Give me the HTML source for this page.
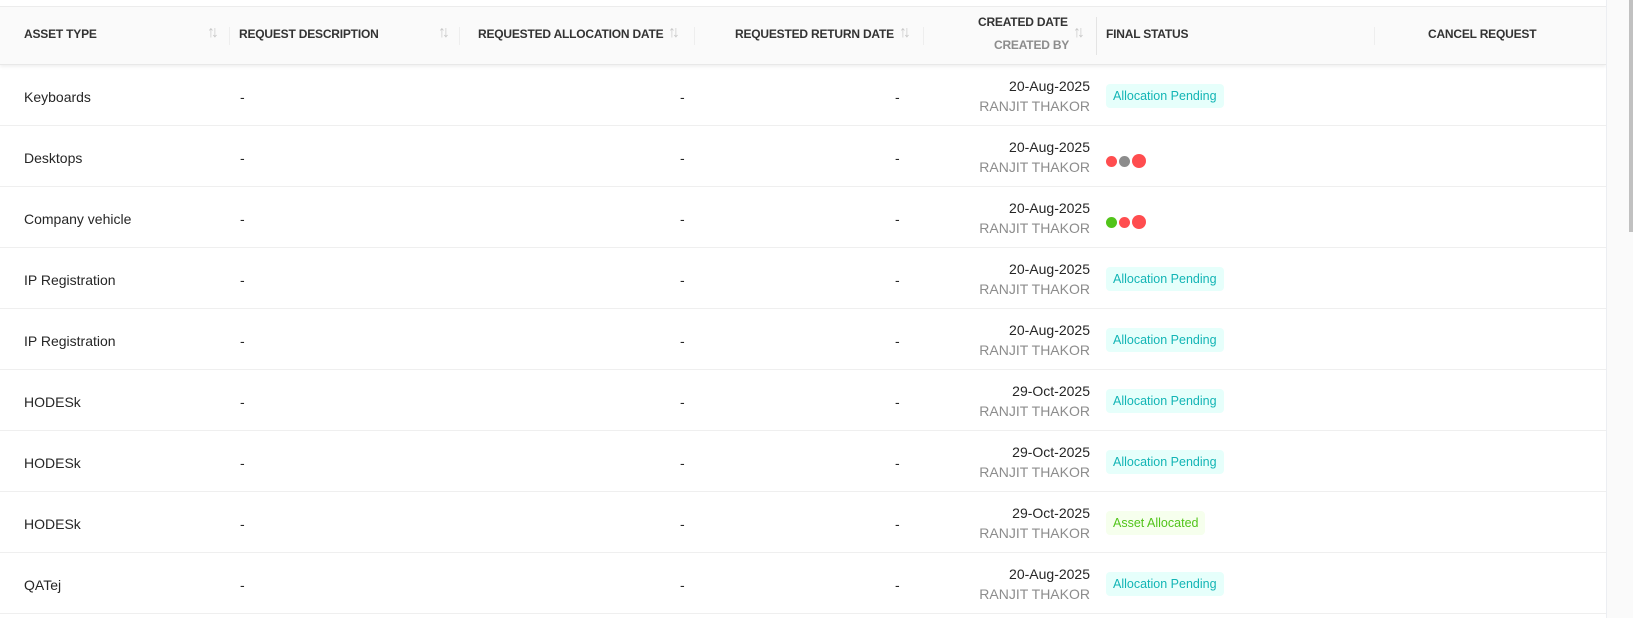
<!DOCTYPE html>
<html><head><meta charset="utf-8"><style>
*{margin:0;padding:0;box-sizing:border-box}
body{width:1633px;height:618px;overflow:hidden;background:#fff;font-family:"Liberation Sans",sans-serif;position:relative;color:#262626}
.wrap{position:absolute;left:0;top:6px;width:1606px;border-top:1px solid #ececec}
.head{height:58px;background:#fafafa;position:relative;box-shadow:0 2px 3px rgba(0,0,0,.06);border-bottom:1px solid #e8e8e8;font-size:12px;font-weight:bold;color:#333;letter-spacing:-0.2px}
.head span{position:absolute}
.sort{color:#c8c8c8;font-weight:normal;font-size:16px;letter-spacing:-4px;top:17px!important}
.sep{position:absolute;top:20px;width:1px;height:18px;background:#eee}
.row{height:61px;border-bottom:1px solid #efefef;position:relative;font-size:14px}
.row span{position:absolute}
.a{left:24px;top:24px}
.d1{left:240px;top:24px}
.d2{left:680px;top:24px}
.d3{left:895px;top:24px}
.dt{right:516px;top:11px;text-align:right;line-height:20px}
.dt i{font-style:normal;color:#8c8c8c;display:block}
.badge{left:1106px;top:19px;height:24px;padding:0 7px;line-height:24px;font-size:12.5px;border-radius:4px}
.p{background:#e6fffb;color:#13b5b5}
.g{background:#f6ffed;color:#52c41a}
.dots{left:1106px;top:26px}
.dots b{display:inline-block;border-radius:50%;margin-right:2px;vertical-align:middle}
.track{position:absolute;left:1606px;top:0;width:27px;height:618px;background:#fafafa;border-left:1px solid #eceef2}
.thumb{position:absolute;left:1629px;top:0;width:4px;height:232px;background:#c1c1c1}
</style></head><body>
<div class="wrap">
<div class="head">
<span style="left:24px;top:20px">ASSET TYPE</span><span class="sort" style="left:207px">↑↓</span>
<div class="sep" style="left:229px"></div>
<span style="left:239px;top:20px">REQUEST DESCRIPTION</span><span class="sort" style="left:438px">↑↓</span>
<div class="sep" style="left:459px"></div>
<span style="left:478px;top:20px">REQUESTED ALLOCATION DATE</span><span class="sort" style="left:668px">↑↓</span>
<div class="sep" style="left:694px"></div>
<span style="left:735px;top:20px">REQUESTED RETURN DATE</span><span class="sort" style="left:899px">↑↓</span>
<div class="sep" style="left:923px"></div>
<span style="left:978px;top:8px">CREATED DATE</span><span style="left:994px;top:31px;color:#8c8c8c">CREATED BY</span><span class="sort" style="left:1073px">↑↓</span>
<div class="sep" style="left:1096px;top:10px;height:38px;background:#e4e4e4"></div>
<span style="left:1106px;top:20px">FINAL STATUS</span>
<div class="sep" style="left:1374px"></div>
<span style="left:1428px;top:20px">CANCEL REQUEST</span>
</div>

<div class="row"><span class="a">Keyboards</span><span class="d1">-</span><span class="d2">-</span><span class="d3">-</span><span class="dt">20-Aug-2025<i>RANJIT THAKOR</i></span><span class="badge p">Allocation Pending</span></div>
<div class="row"><span class="a">Desktops</span><span class="d1">-</span><span class="d2">-</span><span class="d3">-</span><span class="dt">20-Aug-2025<i>RANJIT THAKOR</i></span><span class="dots"><b style="width:11px;height:11px;background:#ff4d4f"></b><b style="width:11px;height:11px;background:#8c8c8c"></b><b style="width:14px;height:14px;background:#ff4d4f"></b></span></div>
<div class="row"><span class="a">Company vehicle</span><span class="d1">-</span><span class="d2">-</span><span class="d3">-</span><span class="dt">20-Aug-2025<i>RANJIT THAKOR</i></span><span class="dots"><b style="width:11px;height:11px;background:#52c41a"></b><b style="width:11px;height:11px;background:#ff4d4f"></b><b style="width:14px;height:14px;background:#ff4d4f"></b></span></div>
<div class="row"><span class="a">IP Registration</span><span class="d1">-</span><span class="d2">-</span><span class="d3">-</span><span class="dt">20-Aug-2025<i>RANJIT THAKOR</i></span><span class="badge p">Allocation Pending</span></div>
<div class="row"><span class="a">IP Registration</span><span class="d1">-</span><span class="d2">-</span><span class="d3">-</span><span class="dt">20-Aug-2025<i>RANJIT THAKOR</i></span><span class="badge p">Allocation Pending</span></div>
<div class="row"><span class="a">HODESk</span><span class="d1">-</span><span class="d2">-</span><span class="d3">-</span><span class="dt">29-Oct-2025<i>RANJIT THAKOR</i></span><span class="badge p">Allocation Pending</span></div>
<div class="row"><span class="a">HODESk</span><span class="d1">-</span><span class="d2">-</span><span class="d3">-</span><span class="dt">29-Oct-2025<i>RANJIT THAKOR</i></span><span class="badge p">Allocation Pending</span></div>
<div class="row"><span class="a">HODESk</span><span class="d1">-</span><span class="d2">-</span><span class="d3">-</span><span class="dt">29-Oct-2025<i>RANJIT THAKOR</i></span><span class="badge g">Asset Allocated</span></div>
<div class="row"><span class="a">QATej</span><span class="d1">-</span><span class="d2">-</span><span class="d3">-</span><span class="dt">20-Aug-2025<i>RANJIT THAKOR</i></span><span class="badge p">Allocation Pending</span></div>
</div>
<div class="track"></div><div class="thumb"></div>
</body></html>
